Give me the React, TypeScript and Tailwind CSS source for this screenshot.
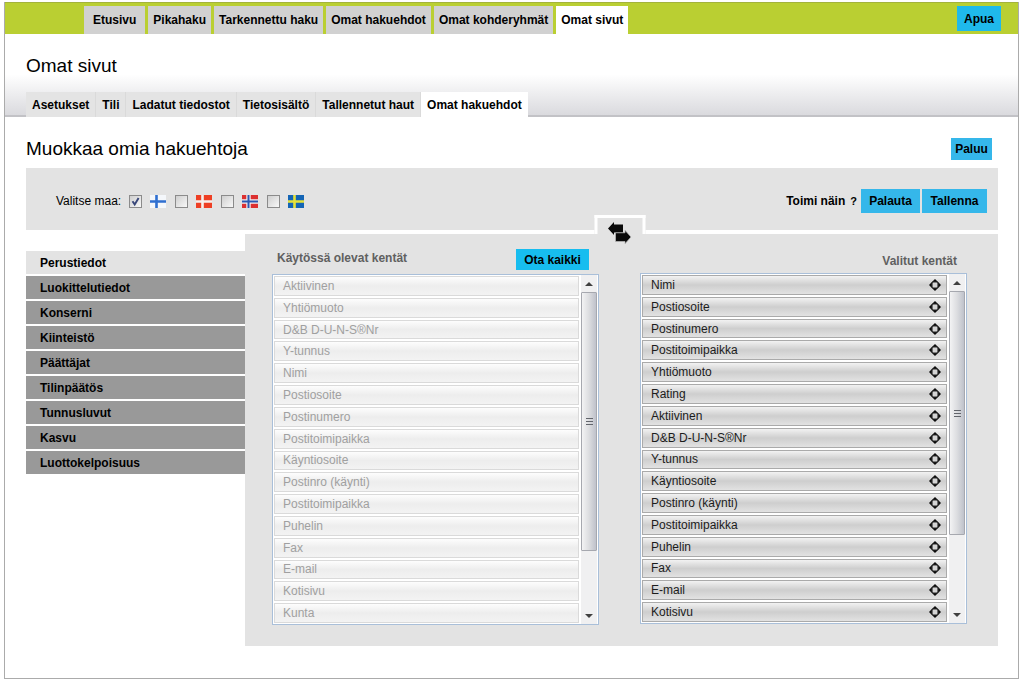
import { useState } from 'react'
import clsx from 'clsx'

const MAIN_TABS = ['Etusivu', 'Pikahaku', 'Tarkennettu haku', 'Omat hakuehdot', 'Omat kohderyhmät', 'Omat sivut']

const SUB_TABS = ['Asetukset', 'Tili', 'Ladatut tiedostot', 'Tietosisältö', 'Tallennetut haut', 'Omat hakuehdot']

const CATEGORIES = [
  'Perustiedot',
  'Luokittelutiedot',
  'Konserni',
  'Kiinteistö',
  'Päättäjat',
  'Tilinpäätös',
  'Tunnusluvut',
  'Kasvu',
  'Luottokelpoisuus',
]

const AVAILABLE = [
  'Aktiivinen', 'Yhtiömuoto', 'D&B D-U-N-S®Nr', 'Y-tunnus', 'Nimi', 'Postiosoite', 'Postinumero', 'Postitoimipaikka',
  'Käyntiosoite', 'Postinro (käynti)', 'Postitoimipaikka', 'Puhelin', 'Fax', 'E-mail', 'Kotisivu', 'Kunta',
]

const SELECTED = [
  'Nimi', 'Postiosoite', 'Postinumero', 'Postitoimipaikka', 'Yhtiömuoto', 'Rating', 'Aktiivinen', 'D&B D-U-N-S®Nr',
  'Y-tunnus', 'Käyntiosoite', 'Postinro (käynti)', 'Postitoimipaikka', 'Puhelin', 'Fax', 'E-mail', 'Kotisivu',
]

const COUNTRIES = [
  { id: 'fi', name: 'Suomi', field: '#f4f7fb', cross: '#2f6fd0', inner: '' },
  { id: 'dk', name: 'Tanska', field: '#ee3f24', cross: '#f6efec', inner: '' },
  { id: 'no', name: 'Norja', field: '#dc3030', cross: '#f1eef2', inner: '#2c58b0' },
  { id: 'se', name: 'Ruotsi', field: '#1465b5', cross: '#e6e23a', inner: '' },
]

const Flag = ({ field, cross, inner }: { field: string; cross: string; inner: string }) => (
  <svg width="16" height="13" viewBox="0 0 16 13" aria-hidden="true">
    <rect width="16" height="13" fill={field} />
    <path d="M0 6.5H16M6.5 0V13" stroke={cross} strokeWidth={inner ? 4.4 : 2.6} />
    {inner && <path d="M0 6.5H16M6.5 0V13" stroke={inner} strokeWidth="2" />}
  </svg>
)

const MoveIcon = () => (
  <svg width="12" height="12" viewBox="0 0 12 12" aria-hidden="true">
    <path d="M6 0L9.6 3.4H2.4zM6 12L2.4 8.6H9.6zM0 6L3.4 2.4V9.6zM12 6L8.6 9.6V2.4z" fill="#0c0c0c" />
    <rect x="3" y="3" width="6" height="6" rx="1.5" fill="#d4d4d4" stroke="#2a2a2a" strokeWidth="1.2" />
  </svg>
)

const SwapIcon = () => (
  <svg width="24" height="22" viewBox="0 0 24 22" aria-hidden="true">
    <path d="M0.5 6.5L6.5 0V2.5H15.5V10.5H6.5V13z" fill="#0a0a0a" />
    <path d="M23.5 15L17.5 21.7V19.5H8V10.8H17.5V8.3z" fill="#0a0a0a" stroke="#bdbdbd" strokeWidth="0.7" />
  </svg>
)

const ScrollBar = ({ thumb }: { thumb: string }) => (
  <div className="flex w-4 shrink-0 flex-col items-center bg-[#f0f0f1]">
    <div className="flex h-[17px] shrink-0 items-center">
      <svg width="8" height="4" viewBox="0 0 8 4"><path d="M4 0L8 4H0z" fill="#404040" /></svg>
    </div>
    <div
      className={clsx(
        'flex w-full shrink-0 flex-col items-center justify-center gap-[2px] rounded-[1px] border border-[#a6a8af] bg-linear-to-r from-[#f3f3f4] via-[#dcdde0] to-[#bfc2cb]',
        thumb,
      )}
    >
      <span className="h-px w-[7px] bg-[#62656c]" />
      <span className="h-px w-[7px] bg-[#62656c]" />
      <span className="h-px w-[7px] bg-[#62656c]" />
    </div>
    <div className="mt-auto flex h-[17px] shrink-0 items-center">
      <svg width="8" height="4" viewBox="0 0 8 4"><path d="M4 4L0 0H8z" fill="#404040" /></svg>
    </div>
  </div>
)

interface FieldListProps {
  items: string[]
  muted?: boolean
  thumb: string
}

const FieldList = ({ items, muted, thumb }: FieldListProps) => (
  <div className="flex h-[351px] gap-[2px] border border-[#a9bfd9] bg-white px-px">
    <ul className="flex flex-1 flex-col gap-[2px] py-px">
      {items.map((item, i) => (
        <li
          key={i}
          className={clsx(
            'flex min-h-0 flex-1 items-center justify-between border pl-2 pr-[5px]',
            muted
              ? 'border-[#dadada] bg-linear-to-b from-[#fdfdfd] via-[#ededed] to-[#f3f3f3] text-[#a0a0a0]'
              : 'border-[#aaaaaa] bg-linear-to-b from-[#f2f2f2] via-[#cecece] to-[#e2e2e2] text-[#1c1c1c]',
          )}
        >
          <span>{item}</span>
          {!muted && <MoveIcon />}
        </li>
      ))}
    </ul>
    <ScrollBar thumb={thumb} />
  </div>
)

export default function App() {
  const [countries, setCountries] = useState<string[]>(['fi'])
  const [category, setCategory] = useState('Perustiedot')

  const toggle = (id: string) =>
    setCountries(prev => (prev.includes(id) ? prev.filter(c => c !== id) : [...prev, id]))

  return (
    <div className="bg-white pl-1 pr-[5px] pt-[2px] font-['Liberation_Sans',Arial,sans-serif] text-[12px] leading-4 text-black">
      <div className="border border-t-0 border-[#ababab] pb-8">
        {/* ── Main navigation ── */}
        <header className="flex h-8 items-end justify-between border-t border-[#a3b33c] bg-[#bacf32] pl-[79px] pr-[17px]">
          <nav className="flex gap-[3px] whitespace-nowrap font-bold">
            {MAIN_TABS.map((tab, i) => (
              <a
                key={tab}
                href="#"
                className={clsx(
                  'flex h-7 items-center',
                  i === 0 ? 'px-[9px]' : 'px-[5px]',
                  tab === 'Omat sivut' ? 'bg-white' : 'bg-[#d1d1d1]',
                )}
              >
                {tab}
              </a>
            ))}
          </nav>
          <button className="mb-[3px] h-[25px] w-11 bg-[#1fb9eb] font-bold">Apua</button>
        </header>

        {/* ── Page title and sub navigation ── */}
        <div className="border-b-2 border-[#c2c2c6] bg-linear-to-b from-white from-50% to-[#dadade] pl-[21px] pt-5">
          <h1 className="text-[19px] leading-6">Omat sivut</h1>
          <nav className="-mb-[2px] mt-[14px] flex whitespace-nowrap font-bold">
            {SUB_TABS.map((tab, i) => {
              const active = i === SUB_TABS.length - 1
              return (
                <a
                  key={tab}
                  href="#"
                  className={clsx(
                    'flex h-[25px] items-center px-[6px]',
                    active ? 'bg-white' : 'border-r border-[#dadada] bg-[#e4e4e4]',
                  )}
                >
                  {tab}
                </a>
              )
            })}
          </nav>
        </div>

        <main className="pl-[21px] pr-5 pt-[21px]">
          <div className="flex items-center justify-between pr-[6px]">
            <h2 className="text-[19px] leading-[22px]">Muokkaa omia hakuehtoja</h2>
            <button className="h-[22px] w-[41px] bg-[#35b7ea] font-bold">Paluu</button>
          </div>

          {/* ── Country selection ── */}
          <div className="mt-2 flex h-[62px] items-center justify-between bg-[#e3e3e3] pl-[30px] pr-[11px] pt-1">
            <div className="flex items-center">
              <span className="mr-2">Valitse maa:</span>
              <div className="flex gap-[9px]">
                {COUNTRIES.map(c => (
                  <label key={c.id} className="flex items-center gap-2" aria-label={c.name}>
                    <span className="grid">
                      <input
                        type="checkbox"
                        checked={countries.includes(c.id)}
                        onChange={() => toggle(c.id)}
                        className="peer col-start-1 row-start-1 size-[13px] appearance-none border border-[#8b8b8b] bg-linear-to-br from-[#cfcfcf] to-[#f8f8f8]"
                      />
                      <svg
                        className="pointer-events-none invisible col-start-1 row-start-1 peer-checked:visible"
                        width="13" height="13" viewBox="0 0 13 13" fill="none" stroke="#39477a" strokeWidth="1.9"
                      >
                        <path d="M3.5 6.2L5.7 9.4L9.6 3" />
                      </svg>
                    </span>
                    <Flag field={c.field} cross={c.cross} inner={c.inner} />
                  </label>
                ))}
              </div>
            </div>
            <div className="flex items-center font-bold">
              <span>Toimi näin</span>
              <a href="#" className="ml-[5px] mr-1 text-[11px]">?</a>
              <button className="mr-[2px] h-6 w-[59px] bg-[#35b7ea]">Palauta</button>
              <button className="h-6 w-[65px] bg-[#35b7ea]">Tallenna</button>
            </div>
          </div>

          <div className="mt-1 flex items-start">
            {/* ── Categories ── */}
            <nav className="mt-[17px] flex w-[219px] shrink-0 flex-col gap-[2px]">
              {CATEGORIES.map(c => (
                <button
                  key={c}
                  onClick={() => setCategory(c)}
                  className={clsx(
                    'h-[23px] pl-[14px] text-left font-bold',
                    c === category ? 'bg-[#e3e3e3]' : 'bg-[#999999]',
                  )}
                >
                  {c}
                </button>
              ))}
            </nav>

            {/* ── Field lists ── */}
            <div className="flex-1 bg-[#e3e3e3] pb-[21px] pl-[27px] pr-[31px]">
              <div className="relative grid grid-cols-2 gap-x-[41px]">
                <div className="absolute -top-[19px] left-1/2 flex h-[30px] w-[51px] -translate-x-1/2 justify-center">
                  <div className="h-[19px] w-full border-[3px] border-b-0 border-white bg-[#e3e3e3]" />
                  <button className="absolute top-[7px]" aria-label="Siirrä kentät">
                    <SwapIcon />
                  </button>
                </div>
                <section>
                  <div className="flex h-10 items-end justify-between pb-1 pl-[5px] pr-[10px]">
                    <h3 className="pb-1 font-bold text-[#606060]">Käytössä olevat kentät</h3>
                    <button className="h-[21px] w-[73px] bg-[#17bdef] font-bold">Ota kaikki</button>
                  </div>
                  <FieldList items={AVAILABLE} muted thumb="h-[259px]" />
                </section>
                <section>
                  <div className="flex h-[39px] items-end justify-end pb-1 pr-[10px]">
                    <h3 className="font-bold text-[#606060]">Valitut kentät</h3>
                  </div>
                  <FieldList items={SELECTED} thumb="h-[244px]" />
                </section>
              </div>
            </div>
          </div>
        </main>
      </div>
    </div>
  )
}
